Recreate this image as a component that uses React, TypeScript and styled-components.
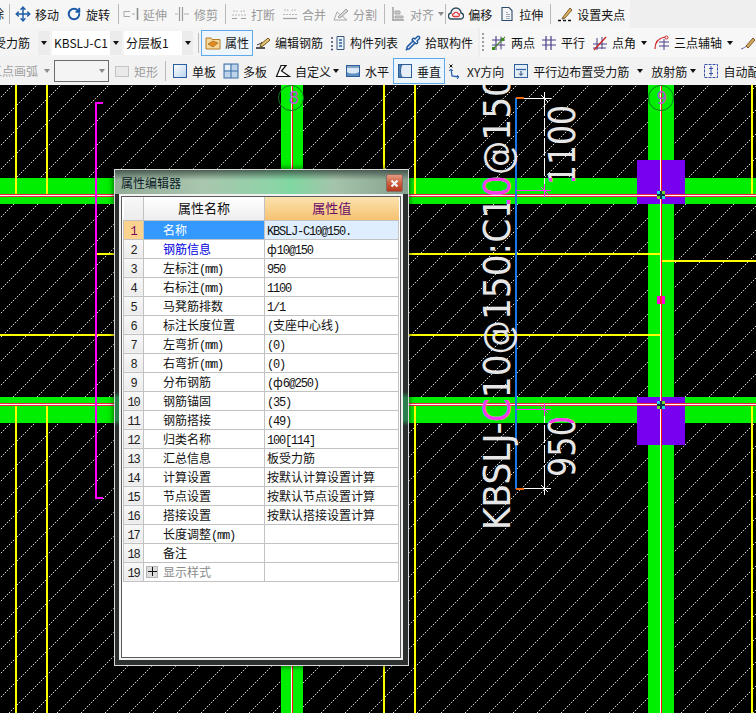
import React, { ReactNode } from "react";
import styled, { createGlobalStyle } from "styled-components";
import { Move, RotateCw, Pipette } from "lucide-react";

const Global = createGlobalStyle`
  html, body { margin: 0; padding: 0; background: #000; }
  * { box-sizing: border-box; }
`;

const Page = styled.div`
  width: 756px; height: 713px; overflow: hidden; display: flex; flex-direction: column;
  font-family: "Noto Sans CJK SC", "Liberation Sans", sans-serif; font-size: 12px; color: #111;
`;
const Bar = styled.div<{ $h: number; $bg?: string }>`
  height: ${p => p.$h}px; flex: none; display: flex; align-items: center; overflow: hidden;
  white-space: nowrap; background: ${p => p.$bg || "#f2f2f2"};
`;
const ToolWrap = styled.div<{ $ml?: number; $off?: boolean }>`
  display: flex; flex: none; align-items: center; gap: 4px; height: 22px;
  margin-left: ${p => p.$ml || 0}px; color: ${p => (p.$off ? "#9a9a9a" : "#141414")};
`;
const IconBox = styled.span`
  width: 16px; height: 16px; flex: none; display: flex; align-items: center; justify-content: center;
`;
const Active = styled(ToolWrap)`
  height: 26px; padding: 0 3px; border: 1px solid #5ea9ea; background: #eef6fd;
`;
const Sep = styled.i<{ $ml?: number }>`
  display: block; flex: none; width: 1px; height: 20px; background: #b9b9b9; margin-left: ${p => p.$ml || 0}px;
`;
const Caret = styled.i<{ $ml?: number; $off?: boolean }>`
  display: block; flex: none; width: 0; height: 0; margin-left: ${p => p.$ml || 0}px;
  border-left: 3.5px solid transparent; border-right: 3.5px solid transparent;
  border-top: 4px solid ${p => (p.$off ? "#8a8a8a" : "#111")};
`;
const Clipped = styled.div<{ $w: number; $shift: number; $off?: boolean }>`
  width: ${p => p.$w}px; flex: none; overflow: hidden; height: 24px; line-height: 24px;
  color: ${p => (p.$off ? "#a0a0a0" : "#141414")};
  & > span { display: block; margin-left: ${p => p.$shift}px; }
`;
const ComboField = styled.div<{ $w: number; $ml?: number }>`
  width: ${p => p.$w}px; height: 24px; line-height: 24px; flex: none; background: #fff; padding-left: 2px;
  margin-left: ${p => p.$ml || 0}px; overflow: hidden; font-size: 12px;
`;
const ComboArrow = styled.div<{ $w: number }>`
  width: ${p => p.$w}px; height: 24px; flex: none; background: #ececec; display: flex; align-items: center; justify-content: center;
`;
const Grip = styled.i<{ $ml: number }>`
  display: block; flex: none; width: 2px; height: 20px; margin-left: ${p => p.$ml}px;
  background: repeating-linear-gradient(180deg, #9d9d9d 0 2px, transparent 2px 4px);
`;
const EmptyCombo = styled.div`
  width: 55px; height: 22px; margin-left: 4px; flex: none; background: #f4f4f4; border: 1px solid #6c6c6c;
  display: flex; align-items: center; justify-content: flex-end; padding-right: 3px;
`;

const Canvas = styled.div`
  position: relative; flex: 1; min-height: 0; background: #000;
  & > svg { display: block; width: 756px; height: 628px; }
`;
const Dialog = styled.div`
  position: absolute; left: 114px; top: 84px; width: 295px; height: 497px; display: flex; flex-direction: column;
  padding: 0 5px 5px 4px; border: 1px solid #dcdcdc; box-shadow: 0 0 5px 1px rgba(0,0,0,.55);
  background: linear-gradient(180deg, #2c302e 0 222px, #2b7f4d 228px 250px, #2c302e 256px 100%);
`;
const TitleBar = styled.div`
  height: 24px; flex: none; margin: 0 -5px 0 -4px; padding: 0 5px 0 6px; display: flex; align-items: center; justify-content: space-between;
  background:
    linear-gradient(180deg, rgba(45,60,52,.75) 0, rgba(45,60,52,0) 10px),
    linear-gradient(90deg, #93ab98 0, #a9c6ae 30%, #8fd3a8 53%, #7fd7a0 60%, #a5c3ab 75%, #86a18f 100%);
  color: #0a1a26; font-size: 12px;
`;
const CloseBtn = styled.div`
  width: 17px; height: 18px; margin-top: 2px; border: 1px solid #8b6a60; border-radius: 2px;
  background: linear-gradient(180deg, #e49a80 0, #cf5f40 50%, #b5381c 100%);
  display: flex; align-items: center; justify-content: center;
`;
const Frame = styled.div`
  flex: 1; min-height: 0; background: #fff; border: 2px solid #f2f2f2; box-shadow: inset 0 0 0 1px #5a5a5a;
  padding: 1px 0 0 2px;
`;
const Grid = styled.table`
  border-collapse: collapse; table-layout: fixed; width: 275px; font-size: 12px;
  th, td { border: 1px solid #c2c2c2; padding: 0; height: 19px; overflow: hidden; white-space: nowrap; font-weight: 400; }
`;
const HeadCorner = styled.th`
  height: 23px !important; border-top: 0 !important; border-left: 0 !important;
  background: linear-gradient(180deg, #f8f8f8, #ececec);
`;
const HeadName = styled.th`
  height: 23px !important; border-top: 0 !important; font-size: 13px; line-height: 22px;
  background: linear-gradient(180deg, #ffffff, #eeeeee); text-align: center; color: #111;
`;
const HeadValue = styled.th`
  height: 23px !important; border-top: 0 !important; border-right: 0 !important; font-size: 13px; line-height: 22px; color: #6a0a6a; text-align: center;
  background: linear-gradient(180deg, #fbe2ae, #f6c170);
`;
const NumCell = styled.td<{ $on?: boolean }>`
  text-align: center; color: ${p => (p.$on ? "#7a0060" : "#222")};
  background: ${p => (p.$on ? "#fbd38f" : "linear-gradient(180deg, #f8f8f8, #ebebeb)")};
`;
const NameCell = styled.td<{ $on?: boolean; $tone?: string }>`
  padding-left: 19px !important;
  color: ${p => (p.$on ? "#fff" : p.$tone || "#111")};
  background: ${p => (p.$on ? "#3399ff" : "#fff")};
`;
const ValueCell = styled.td<{ $on?: boolean }>`
  padding-left: 2px !important; color: #111; background: ${p => (p.$on ? "#deeeff" : "#fff")};
`;
const CellBody = styled.div`
  position: relative; display: block; height: 18px; line-height: 18px; overflow: visible;
`;
const Expander = styled.span`
  position: absolute; left: -17px; top: 3px; width: 12px; height: 12px; background: #dcdcdc; border: 1px solid #b5b5b5;
  display: flex; align-items: center; justify-content: center;
`;
const Latin = styled.span`
  font-family: "Liberation Mono", monospace; font-size: 12px; letter-spacing: -1.2px; line-height: 1;
`;

const Mixed = ({ text }: { text: string }) => (
  <>
    {text.split(/([\x00-\x7f]+)/).map((t, i) =>
      !t ? null : /^[\x00-\x7f]+$/.test(t) ? <Latin key={i}>{t}</Latin> : <span key={i}>{t}</span>
    )}
  </>
);

const Svg = ({ children }: { children: ReactNode }) => (
  <svg width="16" height="16" viewBox="0 0 16 16" fill="none" strokeWidth="1" shapeRendering="geometricPrecision">{children}</svg>
);

const icons: Record<string, ReactNode> = {
  move: <Move size={16} color="#1c5aa6" strokeWidth={2.2} />,
  rotate: <RotateCw size={14} color="#1c5aa6" strokeWidth={3.4} />,
  extend: <Svg><path d="M1 5.5h6M1 10.5h6M1 5.5v5M9 8h3" stroke="#a8a8a8" /><path d="M14.5 2v12" stroke="#8e8e8e" strokeWidth="1.6" /></Svg>,
  trim: <Svg><path d="M5.5 1v14M8.5 1v14" stroke="#9c9c9c" strokeWidth="1.2" /><path d="M1 8h3M10 8h5" stroke="#b4b4b4" /></Svg>,
  break: <Svg><path d="M1 12.5h5M10 12.5h5" stroke="#a0a0a0" strokeWidth="1.2" /><path d="M2 5h4v2M14 5h-4v2M1 9h14" stroke="#b8b8b8" strokeDasharray="2 1" /></Svg>,
  merge: <Svg><path d="M1 12.5h14" stroke="#a0a0a0" strokeWidth="1.2" /><path d="M2 4h4v2M14 4h-4v2M1 8.5h14" stroke="#b8b8b8" strokeDasharray="2 1" /></Svg>,
  split: <Svg><path d="M1 14h13L4 6z" stroke="#a8a8a8" /><path d="M5 11l8-8 2 2-8 7z" fill="#d6d6d6" stroke="#a0a0a0" /></Svg>,
  align: <Svg><path d="M3 1v14M3 14h11" stroke="#9c9c9c" strokeWidth="1.4" /><path d="M5 5h5v3H5zM5 10h8v2H5z" fill="#c8c8c8" stroke="#a8a8a8" /></Svg>,
  offset: <Svg><path d="M4 13a3 3 0 0 1-1-6 5 5 0 0 1 10 0 3 3 0 0 1-1 6z" stroke="#2c4a5c" strokeWidth="1.4" /><path d="M6 10.5a1.5 1.5 0 0 1 0-3 2.2 2.2 0 0 1 4 0 1.5 1.5 0 0 1 0 3z" stroke="#dd3b3b" strokeWidth="1.3" /></Svg>,
  stretch: <Svg><path d="M3 1.5h7l3 3v10H3z" stroke="#2a4a68" strokeWidth="1.1" /><path d="M8 6v7M10 8v5" stroke="#48607a" strokeDasharray="1 1" /></Svg>,
  grip: <Svg><path d="M1 14.5h3M6 14.5h3M11 14.5h3" stroke="#111" strokeWidth="1.4" /><path d="M6 11l7-9 2 2-7 8-3 1z" fill="#e8b45a" stroke="#6e5a30" /></Svg>,
  attr: <Svg><path d="M1 3h5l1 1.5h8V14H1z" fill="#f8d89a" stroke="#b87c28" /><path d="M3 9l5-3 5 2-5 4z" fill="#e58a1f" stroke="#8a5a18" strokeWidth=".6" /></Svg>,
  edit: <Svg><path d="M1 13h9" stroke="#111" strokeWidth="1.4" /><path d="M2 10c3-1 4-2 5-3" stroke="#333" /><path d="M6 9l7-6 2 2-7 6-3 1z" fill="#e5c270" stroke="#6e5520" /></Svg>,
  list: <Svg><path d="M1 3h3M1 7h3M1 11h3M1 14.5h3" stroke="#3b4c60" strokeWidth="1.6" strokeDasharray="2 1" /><path d="M7 1.5h7v13H7z" fill="#eaf2fb" stroke="#3b5878" /><path d="M9 5h3M9 8h3M9 11h3" stroke="#2f5f98" strokeWidth="1.3" /></Svg>,
  pick: <Pipette size={16} color="#1c5aa6" strokeWidth={2.2} />,
  two: <Svg><path d="M1 5h13M1 10h13M5 1v14" stroke="#4a3f86" strokeWidth="1.1" /><path d="M10 1.5v13" stroke="#4a3f86" /><path d="M2 14L14 2" stroke="#4a8a2a" strokeWidth="1.1" /><rect x="1" y="12" width="3" height="3" fill="#3c8a1e" /><rect x="10" y="3" width="3" height="3" fill="#3c8a1e" /></Svg>,
  par: <Svg><path d="M1 5h14M1 10h14M5 1v14M10 1v14" stroke="#4a3f86" strokeWidth="1.2" /></Svg>,
  ang: <Svg><path d="M1 9h14M1 13h13M5 3v12M10 2v12" stroke="#4a3f86" /><path d="M2 15L14 2" stroke="#cc2222" strokeWidth="1.3" /></Svg>,
  tri: <Svg><path d="M1 14c0-7 4-11 10-12" stroke="#cc2222" strokeWidth="1.2" /><path d="M5 7h10M5 11h10M10 4v11" stroke="#4a3f86" /><circle cx="12.5" cy="2.5" r="1.5" stroke="#cc2222" /></Svg>,
  wand: <Svg><path d="M1 14c3-1 5-2 6-4" stroke="#6a6aa8" /><path d="M6 11l7-8 2 2-7 8z" fill="#d8a85a" stroke="#7a5a30" /></Svg>,
  check: <Svg><rect x="1.5" y="3.5" width="13" height="10" fill="#e9e9e9" stroke="#c4c4c4" /></Svg>,
  single: <Svg><rect x="1.5" y="1.5" width="13" height="13" fill="url(#sp)" stroke="#2a5fa0" /><defs><linearGradient id="sp" x1="0" y1="0" x2="1" y2="1"><stop offset="0" stopColor="#fff" /><stop offset="1" stopColor="#b9d3ee" /></linearGradient></defs></Svg>,
  multi: <Svg><rect x="1" y="1" width="14" height="14" fill="#bcd3ea" stroke="#3a6ea5" /><path d="M8 1v14M1 8h14" stroke="#3a6ea5" /><rect x="2" y="2" width="5" height="5" fill="#e8f1fa" /></Svg>,
  custom: <Svg><path d="M1.5 13.5L6 2.5h5L6.5 8l8 5.5z" fill="#fff" stroke="#111" strokeWidth="1.2" /></Svg>,
  horiz: <Svg><rect x="1.5" y="2.5" width="13" height="11" fill="#dbe8f6" stroke="#2f5f98" /><path d="M2 9c3 2 9 2 12 0v4H2z" fill="#5f8fc2" /><path d="M2 4h12" stroke="#2f5f98" /></Svg>,
  vert: <Svg><rect x="1.5" y="1.5" width="13" height="13" fill="#e6eff8" stroke="#2f5f98" /><path d="M5 2c-2 3-2 9 0 12H2V2z" fill="#4d7fb5" /><path d="M5 2c-2 3-2 9 0 12" stroke="#2f5f98" /></Svg>,
  xy: <Svg><path d="M2.5 1.5l3 3M5.5 1.5l-3 3" stroke="#111" /><path d="M4 6l1 7 7 1" stroke="#2a62b0" strokeWidth="1.3" /><path d="M10 12l2 2-2 2M2 8l2-2 2 2" stroke="#2a62b0" /></Svg>,
  paredge: <Svg><rect x="1.5" y="1.5" width="13" height="13" fill="#e3edf8" stroke="#2f5f98" /><path d="M3 6.5h10" stroke="#2f5f98" strokeWidth="1.2" /><path d="M8 8v4M6 10.5l2 2 2-2" stroke="#1b3f68" /></Svg>,
  auto: <Svg><path d="M1.5 1.5h13v13h-13z" stroke="#3a50a8" strokeDasharray="3 1" /><path d="M8 3v10M6 5.5h4M6 10.5h4" stroke="#3a50a8" /></Svg>,
};

type ToolProps = { icon: string; label: string; ml?: number; off?: boolean };
const Tool = ({ icon, label, ml, off }: ToolProps) => (
  <ToolWrap $ml={ml} $off={off}><IconBox>{icons[icon]}</IconBox>{label && <span>{label}</span>}</ToolWrap>
);
const ActiveTool = ({ icon, label, ml }: ToolProps) => (
  <Active $ml={ml}><IconBox>{icons[icon]}</IconBox><span>{label}</span></Active>
);

const rows: { n: string; v?: string; tone?: string }[] = [
  { n: "名称", v: "KBSLJ-C10@150." },
  { n: "钢筋信息", v: "ф10@150", tone: "#0000e0" },
  { n: "左标注(mm)", v: "950" },
  { n: "右标注(mm)", v: "1100" },
  { n: "马凳筋排数", v: "1/1" },
  { n: "标注长度位置", v: "(支座中心线)" },
  { n: "左弯折(mm)", v: "(0)" },
  { n: "右弯折(mm)", v: "(0)" },
  { n: "分布钢筋", v: "(ф6@250)" },
  { n: "钢筋锚固", v: "(35)" },
  { n: "钢筋搭接", v: "(49)" },
  { n: "归类名称", v: "100[114]" },
  { n: "汇总信息", v: "板受力筋" },
  { n: "计算设置", v: "按默认计算设置计算" },
  { n: "节点设置", v: "按默认节点设置计算" },
  { n: "搭接设置", v: "按默认搭接设置计算" },
  { n: "长度调整(mm)" },
  { n: "备注" },
  { n: "显示样式", tone: "#8a8a8a" },
];

const R = ({ x, y, w, h, c }: { x: number; y: number; w: number; h: number; c: string }) => (
  <rect x={x} y={y} width={w} height={h} fill={c} />
);
const Cross = ({ x, y, c }: { x: number; y: number; c: string }) => (
  <path d={`M${x - 6} ${y + .5}h13M${x + .5} ${y - 6}v13M${x - 3} ${y - 3}l7 7`} stroke={c} strokeWidth="1" />
);
const Node = ({ y }: { y: number }) => (
  <g>
    <R x={657} y={y - 4} w={8} h={8} c="#6fdc2c" />
    <R x={657} y={y - 4} w={4} h={4} c="#22d8d8" />
    <R x={661} y={y} w={4} h={4} c="#22d8d8" />
    <R x={660} y={y - 4} w={2} h={8} c="#10304a" />
    <R x={657} y={y - 1} w={8} h={2} c="#10304a" />
  </g>
);
const Rebar = () => (
  <>
    <text transform="translate(510 530) rotate(-90)" fontFamily="DejaVu Sans" fontSize="37" textLength="455" lengthAdjust="spacingAndGlyphs">KBSLJ-C10@150:C10@150</text>
    <text transform="translate(575 185) rotate(-90)" fontFamily="DejaVu Sans" fontSize="37" textLength="80" lengthAdjust="spacingAndGlyphs">1100</text>
    <text transform="translate(575 477) rotate(-90)" fontFamily="DejaVu Sans" fontSize="37" textLength="61" lengthAdjust="spacingAndGlyphs">950</text>
  </>
);

const Drawing = () => (
  <svg viewBox="0 85 756 628">
    <defs>
      <pattern id="hatch" width="24" height="24" patternUnits="userSpaceOnUse" patternTransform="translate(0 2)">
        <path d="M-1 25L25 -1" stroke="#d8d8d8" strokeWidth="1" strokeDasharray="1.6 1.2" />
      </pattern>
      <clipPath id="bands">
        <rect x="0" y="178" width="756" height="26" />
        <rect x="0" y="397" width="756" height="26" />
      </clipPath>
    </defs>
    <R x={0} y={85} w={756} h={628} c="#000" />
    <rect x="0" y="85" width="756" height="628" fill="url(#hatch)" shapeRendering="crispEdges" />
    <g shapeRendering="crispEdges">
      <R x={281} y={85} w={22} h={628} c="#00ee00" />
      <R x={648} y={85} w={26} h={628} c="#00ee00" />
      <R x={0} y={178} w={756} h={26} c="#00ee00" />
      <R x={0} y={397} w={756} h={26} c="#00ee00" />
      <R x={637} y={160} w={48} h={44} c="#7800f0" />
      <R x={637} y={397} w={48} h={48} c="#7800f0" />
      {[16, 47, 384, 415, 752].map(x => (
        <g key={x}>
          <R x={x - 1} y={85} w={2} h={110} c="#ffff00" />
          <R x={x - 1} y={406} w={2} h={307} c="#ffff00" />
        </g>
      ))}
      <R x={96} y={253} w={564} h={2} c="#ffff00" />
      <R x={0} y={334} w={660} h={2} c="#ffff00" />
      <R x={662} y={260} w={94} h={2} c="#ffff00" />
      <R x={0} y={194} w={756} h={3} c="#ee2244" />
      <R x={0} y={195} w={756} h={1} c="#ffffff" />
      <R x={0} y={403} w={756} h={3} c="#ee2244" />
      <R x={0} y={404} w={756} h={1} c="#ffffff" />
      <R x={291} y={85} w={1} h={628} c="#ffffff" />
      <R x={292} y={85} w={1} h={628} c="#ff1111" />
      <R x={660} y={85} w={1} h={628} c="#ffffff" />
      <R x={661} y={85} w={1} h={628} c="#ff1111" />
      <R x={657} y={296} w={8} h={8} c="#ff00dd" />
      <R x={660} y={296} w={2} h={8} c="#ff2222" />
      <R x={95} y={102} w={2} h={396} c="#ff00ff" />
      <R x={95} y={102} w={8} h={2} c="#ff00ff" />
      <R x={95} y={497} w={8} h={2} c="#ff00ff" />
      <R x={515} y={98} w={2} h={391} c="#1878e8" />
      <R x={516} y={97} w={8} h={2} c="#ee6a10" />
      <R x={516} y={488} w={8} h={2} c="#ee6a10" />
      <R x={524} y={98} w={20} h={1} c="#fff" />
      <R x={524} y={488} w={20} h={1} c="#fff" />
      <R x={516} y={190} w={35} h={1} c="#ff33ee" />
      <R x={516} y={409} w={35} h={1} c="#ff33ee" />
    </g>
    <path d="M544.5 98V195M544.5 405V489" stroke="#fff" strokeDasharray="18 2" shapeRendering="crispEdges" />
    <Cross x={544} y={98} c="#fff" />
    <Cross x={544} y={488} c="#fff" />
    <Cross x={544} y={190} c="#ff33ee" />
    <Cross x={544} y={409} c="#ff33ee" />
    <Node y={195} />
    <Node y={405} />
    <g fill="none" stroke="#0a7a22" strokeWidth="1">
      <circle cx="291" cy="98" r="12.5" />
      <circle cx="661" cy="98" r="12.5" />
    </g>
    <g fontFamily="DejaVu Sans" fontSize="17" fill="#b55bd0" textAnchor="middle">
      <text x="294" y="104">8</text>
      <text x="662" y="104">9</text>
    </g>
    <g fill="#e6e6e6"><Rebar /></g>
    <g fill="#f23ce8" clipPath="url(#bands)"><Rebar /></g>
  </svg>
);

export default function App() {
  return (
    <Page>
      <Global />
      <Bar $h={28} $bg="linear-gradient(90deg, #f6f6f6 0 630px, #efefef 630px)">
        <Clipped $w={9} $shift={-8}><span>除</span></Clipped>
        <Sep />
        <Tool ml={5} icon="move" label="移动" />
        <Tool ml={7} icon="rotate" label="旋转" />
        <Sep $ml={8} />
        <Tool ml={4} icon="extend" label="延伸" off />
        <Tool ml={7} icon="trim" label="修剪" off />
        <Sep $ml={7} />
        <Tool ml={5} icon="break" label="打断" off />
        <Tool ml={7} icon="merge" label="合并" off />
        <Tool ml={7} icon="split" label="分割" off />
        <Sep $ml={7} />
        <Tool ml={5} icon="align" label="对齐" off />
        <Caret $ml={4} $off />
        <Sep $ml={1} />
        <Tool ml={2} icon="offset" label="偏移" />
        <Tool ml={7} icon="stretch" label="拉伸" />
        <Sep $ml={7} />
        <Tool ml={6} icon="grip" label="设置夹点" />
      </Bar>
      <Bar $h={29} $bg="linear-gradient(90deg, #f4f4f4 0 478px, #ededed 478px 480px, #f7f7f7 480px)">
        <Clipped $w={38} $shift={-6}><span>受力筋</span></Clipped>
        <ComboArrow $w={12}><Caret /></ComboArrow>
        <ComboField $w={58} $ml={2}>KBSLJ-C1</ComboField>
        <ComboArrow $w={12}><Caret /></ComboArrow>
        <ComboField $w={58} $ml={2}>分层板1</ComboField>
        <ComboArrow $w={11}><Caret /></ComboArrow>
        <Sep $ml={5} />
        <ActiveTool ml={2} icon="attr" label="属性" />
        <Tool ml={2} icon="edit" label="编辑钢筋" />
        <Tool ml={7} icon="list" label="构件列表" />
        <Tool ml={7} icon="pick" label="拾取构件" />
        <Grip $ml={9} />
        <Tool ml={7} icon="two" label="两点" />
        <Tool ml={6} icon="par" label="平行" />
        <Tool ml={7} icon="ang" label="点角" />
        <Caret $ml={5} />
        <Tool ml={7} icon="tri" label="三点辅轴" />
        <Caret $ml={5} />
        <Tool ml={7} icon="wand" label="" />
      </Bar>
      <Bar $h={28}>
        <Clipped $w={38} $shift={-10} $off><span>三点画弧</span></Clipped>
        <Caret $ml={6} $off />
        <EmptyCombo><Caret $off /></EmptyCombo>
        <Tool ml={5} icon="check" label="矩形" off />
        <Sep $ml={7} />
        <Tool ml={6} icon="single" label="单板" />
        <Tool ml={7} icon="multi" label="多板" />
        <Tool ml={8} icon="custom" label="自定义" />
        <Caret $ml={2} />
        <Tool ml={6} icon="horiz" label="水平" />
        <ActiveTool ml={4} icon="vert" label="垂直" />
        <Tool ml={2} icon="xy" label="XY方向" />
        <Tool ml={9} icon="paredge" label="平行边布置受力筋" />
        <Caret $ml={8} />
        <ToolWrap $ml={8}><span>放射筋</span></ToolWrap>
        <Caret $ml={3} />
        <Tool ml={7} icon="auto" label="自动配" />
      </Bar>
      <Canvas>
        <Drawing />
        <Dialog>
          <TitleBar>
            <span>属性编辑器</span>
            <CloseBtn>
              <svg width="9" height="9" viewBox="0 0 9 9"><path d="M1.5 1.5l6 6M7.5 1.5l-6 6" stroke="#f4f6fa" strokeWidth="2.2" /></svg>
            </CloseBtn>
          </TitleBar>
          <Frame>
            <Grid>
              <colgroup><col width="20" /><col width="121" /><col width="134" /></colgroup>
              <thead>
                <tr><HeadCorner /><HeadName>属性名称</HeadName><HeadValue>属性值</HeadValue></tr>
              </thead>
              <tbody>
                {rows.map((r, i) => (
                  <tr key={i}>
                    <NumCell $on={i === 0}><CellBody><Latin>{i + 1}</Latin></CellBody></NumCell>
                    <NameCell $on={i === 0} $tone={r.tone}>
                      <CellBody>
                        {i === 18 && (
                          <Expander>
                            <svg width="9" height="9" viewBox="0 0 9 9"><path d="M4.5 0v9M0 4.5h9" stroke="#111" /></svg>
                          </Expander>
                        )}
                        <Mixed text={r.n} />
                      </CellBody>
                    </NameCell>
                    <ValueCell $on={i === 0}><CellBody><Mixed text={r.v || ""} /></CellBody></ValueCell>
                  </tr>
                ))}
              </tbody>
            </Grid>
          </Frame>
        </Dialog>
      </Canvas>
    </Page>
  );
}
